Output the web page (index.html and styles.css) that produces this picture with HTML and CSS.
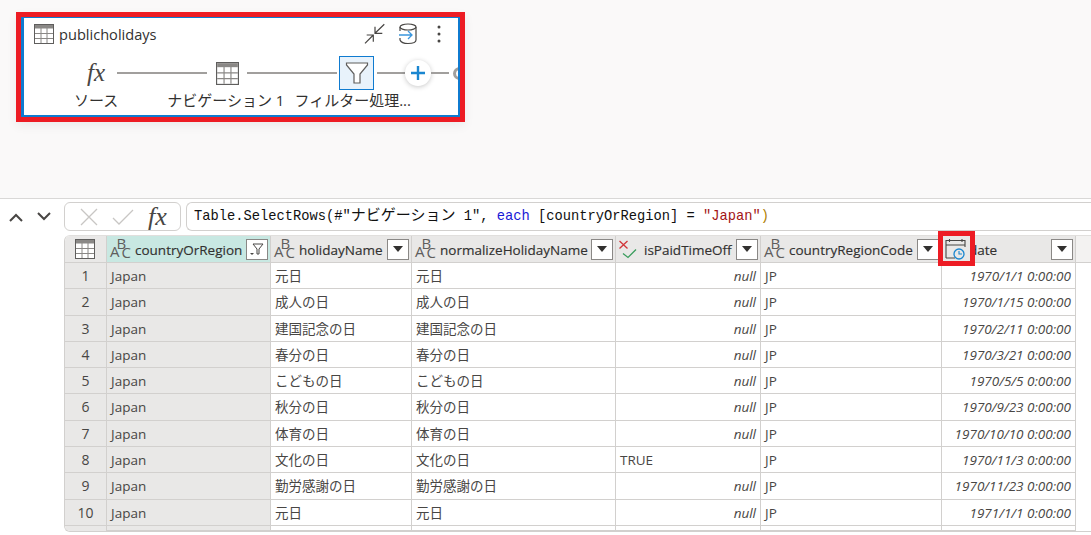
FILE: index.html
```html
<!DOCTYPE html>
<html lang="ja">
<head>
<meta charset="utf-8">
<title>publicholidays</title>
<link rel="stylesheet" href="styles.css">
</head>
<body>
<svg class="defs" width="0" height="0" aria-hidden="true">
  <symbol id="i-table" viewBox="0 0 20 20">
    <rect x=".5" y=".5" width="19" height="19" fill="#fff" stroke="#5f5e5d"/>
    <rect x="1" y="1" width="18" height="3.5" fill="#8a8886"/>
    <path d="M1 9.5h18M1 14.500h18M7 4v15M13 4v15" stroke="#8a8886" fill="none"/>
  </symbol>
</svg>
<section class="top">
  <div class="annot">
    <div class="card">
      <div class="card-head">
        <svg class="ic-table" width="20" height="20"><use href="#i-table"/></svg>
        <span class="card-title">publicholidays</span>
        <span class="card-tools">
          <svg width="22" height="22" viewBox="0 0 22 22" fill="none" stroke="#484644" stroke-width="1.2"><path d="M20.300 1.300L11 10.300M11 3.700v6.600h7.300M1 20.300L9.300 12M2.700 12h6.600v6.700"/></svg>
          <svg class="db" width="20" height="22" viewBox="0 0 20 22" fill="none"><path d="M2 4v4M18 4v13c0 2-3 3.500-8 3.500-4 0-7-1-8-3.500v-2" stroke="#484644" stroke-width="1.2"/><ellipse cx="10" cy="4" rx="8" ry="3" stroke="#484644" stroke-width="1.2"/><path d="M1 12h13M10 8l4 4-4 4" stroke="#3a96dd" stroke-width="1.300"/></svg>
          <svg width="6" height="20" viewBox="0 0 6 20" fill="#484644"><circle cx="3" cy="3" r="1.500"/><circle cx="3" cy="10" r="1.500"/><circle cx="3" cy="17" r="1.500"/></svg>
        </span>
      </div>
      <div class="flow">
        <span class="step"><span class="fx big">fx</span></span>
        <span class="line long first"></span>
        <span class="step"><svg width="23" height="23"><use href="#i-table"/></svg></span>
        <span class="line long"></span>
        <span class="step sel">
          <svg width="24" height="24" viewBox="0 0 24 24" fill="#fff" stroke="#5f5e5d" stroke-width="1.200"><path d="M1.500 2h21v2l-7.500 9v9H9v-9L1.500 4z"/></svg>
        </span>
        <span class="line short"></span>
        <span class="plus">
          <svg width="14" height="14" viewBox="0 0 14 14" stroke="#1a86d0" stroke-width="2.400"><path d="M7 0v14M0 7h14"/></svg>
        </span>
        <span class="line tiny"></span>
        <span class="dot"></span>
      </div>
      <div class="labels">
        <span class="lab lab1">ソース</span>
        <span class="lab lab2">ナビゲーション 1</span>
        <span class="lab lab3">フィルター処理...</span>
      </div>
    </div>
  </div>
</section>
<section class="bottom">
  <div class="formula">
    <span class="nav">
      <svg width="16" height="10" viewBox="0 0 16 10" fill="none" stroke="#484644" stroke-width="2"><path d="M2 9l6-6 6 6"/></svg>
      <svg width="16" height="10" viewBox="0 0 16 10" fill="none" stroke="#484644" stroke-width="2"><path d="M2 1l6 6 6-6"/></svg>
    </span>
    <span class="fx-box">
      <svg width="20" height="20" viewBox="0 0 20 20" stroke="#c8c6c4" stroke-width="1.300" fill="none"><path d="M2 2l16 16M18 2L2 18"/></svg>
      <svg width="24" height="20" viewBox="0 0 24 20" stroke="#c8c6c4" stroke-width="1.300" fill="none"><path d="M2 11l6 6L22 3"/></svg>
      <span class="fx">fx</span>
    </span>
    <div class="input">Table.SelectRows(#"<span class="cjk">ナビゲーション</span> 1", <span class="kw">each</span> [countryOrRegion] = <span class="str">"Japan"</span><span class="par">)</span></div>
  </div>
  <div class="grid-wrap">
    <div class="grid" id="grid">
      <div class="hd corner"><svg width="20" height="20"><use href="#i-table"/></svg></div>
      <div class="hd hl"><svg class="ty" width="24" height="24" viewBox="0 0 24 24"><text x="0" y="19.500" class="abc">A</text><text x="6.500" y="12" class="abc">B</text><text x="11.500" y="20.500" class="abc">C</text></svg><span class="nm">countryOrRegion</span>
        <span class="btn"><svg width="14" height="13" viewBox="0 0 14 13" fill="none" stroke="#484644"><path d="M3 1h10l-4 5v5H7V6z"/><path d="M0 10h4l-2 2z" fill="#484644" stroke="none"/></svg></span></div>
      <div class="hd"><svg class="ty" width="24" height="24" viewBox="0 0 24 24"><text x="0" y="19.500" class="abc">A</text><text x="6.500" y="12" class="abc">B</text><text x="11.500" y="20.500" class="abc">C</text></svg><span class="nm">holidayName</span><span class="btn"><i class="tri"></i></span></div>
      <div class="hd"><svg class="ty" width="24" height="24" viewBox="0 0 24 24"><text x="0" y="19.500" class="abc">A</text><text x="6.500" y="12" class="abc">B</text><text x="11.500" y="20.500" class="abc">C</text></svg><span class="nm">normalizeHolidayName</span><span class="btn"><i class="tri"></i></span></div>
      <div class="hd"><svg class="ty" width="24" height="22" viewBox="0 0 24 22" fill="none" stroke-width="1.300"><path d="M0.500 3l8 7.500M8.500 3l-8 7.500" stroke="#d13438"/><path d="M4 15.500l5 4 8-8" stroke="#3a9d5d"/></svg><span class="nm">isPaidTimeOff</span><span class="btn"><i class="tri"></i></span></div>
      <div class="hd"><svg class="ty" width="24" height="24" viewBox="0 0 24 24"><text x="0" y="19.500" class="abc">A</text><text x="6.500" y="12" class="abc">B</text><text x="11.500" y="20.500" class="abc">C</text></svg><span class="nm">countryRegionCode</span><span class="btn"><i class="tri"></i></span></div>
      <div class="hd hd-date">
        <span class="nm nm-date">date</span><span class="btn"><i class="tri"></i></span>
        <span class="annot-ic"><svg width="27" height="25" viewBox="0 0 27 25" fill="none" stroke="#484644" stroke-width="1.100"><path d="M3 22V4.500h19V11M3 9h19M6.500 3v3M19 3v3M3 22h9"/><circle cx="16" cy="18" r="5" stroke="#1a86d0" stroke-width="1.300"/><path d="M16 15v3h3" stroke="#1a86d0"/></svg></span>
      </div>
      <div class="hd fill"></div>
    </div>
  </div>
</section>
<script src="grid.js"></script>
</body>
</html>
```
FILE: grid.js
```js
var rows = [
  ["元日","1970/1/1 0:00:00"],["成人の日","1970/1/15 0:00:00"],["建国記念の日","1970/2/11 0:00:00"],
  ["春分の日","1970/3/21 0:00:00"],["こどもの日","1970/5/5 0:00:00"],["秋分の日","1970/9/23 0:00:00"],
  ["体育の日","1970/10/10 0:00:00"],["文化の日","1970/11/3 0:00:00"],["勤労感謝の日","1970/11/23 0:00:00"],["元日","1971/1/1 0:00:00"],["",""]
];
var g = document.getElementById("grid");
function cell(cls, txt) {
  var d = document.createElement("div");
  d.className = "c " + cls;
  d.textContent = txt;
  g.appendChild(d);
}
rows.forEach(function (r, i) {
  var blank = r[0] === "";
  cell(blank ? "num last" : "num", blank ? "" : i + 1);
  cell("shade", blank ? "" : "Japan");
  cell("", r[0]);
  cell("", r[0]);
  if (blank) cell("", "");
  else if (i === 7) cell("", "TRUE");
  else cell("right it", "null");
  cell("", blank ? "" : "JP");
  cell("right it", r[1]);
  cell("fill", "");
});
```
FILE: styles.css
```css
* { box-sizing: border-box; }
html, body { margin: 0; height: 100%; overflow: hidden; }
body {
  width: 1091px;
  height: 535px;
  background: #fff;
  color: #323130;
  font-family: "Open Sans", "Noto Sans CJK JP", sans-serif;
  font-size: 13.5px;
}
.defs { position: absolute; }
.abc { font: 15px "Open Sans", sans-serif; fill: #5f5e5d; }

.top {
  height: 199px;
  padding: 12px 0 0 16px;
  background: #faf9f9;
  border-bottom: 1px solid #d9d8d7;
}
.annot {
  width: 449px;
  height: 110px;
  border: 5px solid #ed1c24;
  box-shadow: 0 4px 10px rgba(0,0,0,.06);
}
.card {
  height: 100%;
  background: #fff;
  border: solid #0f7bd0;
  border-width: 1px 2px 2px 3px;
  overflow: hidden;
}
.card-head {
  display: flex;
  align-items: center;
  height: 32px;
  padding-left: 10px;
}
.card-title { margin-left: 5px; font-size: 14.6px; }
.card-tools { margin-left: auto; display: flex; align-items: center; gap: 12px; padding-right: 16px; }
.db { margin-right: 6px; }
.flow {
  display: flex;
  align-items: center;
  height: 34px;
  margin-top: 6px;
  padding-left: 52px;
  white-space: nowrap;
}
.step { width: 40px; height: 34px; display: flex; align-items: center; justify-content: center; flex: none; }
.step.sel { width: 35px; margin-left: 2px; background: #e8f2fb; border: 1px solid #0f7bd0; }
.line { height: 2px; background: #a19f9d; flex: none; }
.line.long { width: 90px; }
.line.first { margin-left: 1px; }
.line.short { width: 28px; margin-left: 3px; }
.line.tiny { width: 18px; }
.plus {
  width: 26px; height: 26px; border-radius: 50%; background: #fff; flex: none;
  display: flex; align-items: center; justify-content: center;
  box-shadow: 0 1px 5px rgba(0,0,0,.22);
}
.dot { width: 13px; height: 13px; border: 3px solid #a19f9d; border-radius: 50%; margin-left: 4px; flex: none; box-shadow: 0 0 0 3px #fff; }
.fx { font: italic 24px "Liberation Serif", serif; color: #484644; }
.fx.big { font-size: 25px; }
.labels { display: flex; font-size: 15px; line-height: 20px; color: #323130; white-space: nowrap; }
.lab1 { margin-left: 50px; }
.lab2 { margin-left: 49px; }
.lab3 { margin-left: 10px; }

.formula { display: flex; align-items: center; height: 29px; margin-top: 3px; }
.nav { width: 64px; display: flex; justify-content: center; gap: 12px; padding-right: 4px; }
.fx-box {
  width: 117px; height: 29px; flex: none;
  display: flex; align-items: center; gap: 12px; padding-left: 14px;
  border: 1px solid #d2d0ce; border-radius: 6px;
}
.fx-box .fx { font-size: 26px; line-height: 1; margin-left: 1px; }
.input {
  flex: 1; height: 29px; margin-left: 5px; padding: 0 0 0 7px;
  border: 1px solid #d2d0ce; border-right: 0; border-radius: 6px 0 0 6px;
  font: 13.75px/27px "Liberation Mono", "Noto Sans CJK JP", monospace;
  color: #111;
  white-space: nowrap;
  overflow: hidden;
}
.cjk { font-size: 15px; }
.kw { color: #1a1ad6; }
.str { color: #a31515; }
.par { color: #b08000; }

.grid-wrap { margin: 4px 0 0 64px; width: 1027px; }
.grid {
  display: grid;
  grid-template-columns: 42px 164px 141px 204px 145px 181px 134px 16px;
  grid-template-rows: 27px repeat(10, 26.3px) 5px;
  border-left: 1px solid #d2d0ce;
  border-top: 1px solid #e1dfdd;
  border-bottom: 1px solid #d2d0ce;
  border-radius: 6px 0 0 6px;
}
.hd {
  display: flex; align-items: center; min-width: 0;
  background: #e9e8e7;
  border-right: 1px solid #d2d0ce;
  border-bottom: 1px solid #d2d0ce;
  padding: 0 2px 0 3px;
  position: relative;
  font-size: 13.5px;
}
.hd.hl { background: #c8e8e2; }
.hd.corner { justify-content: center; padding: 0 2px 0 0; border-top-left-radius: 5px; }
.hd.fill { background: #f3f2f1; border-right: 0; }
.ty { flex: none; margin-right: 1px; overflow: visible; }
.nm { white-space: nowrap; color: #323130; -webkit-text-stroke: .15px #323130; margin-top: 2px; }
.nm-date { margin-left: 24px; }
.btn {
  margin-left: auto; flex: none; width: 22px; height: 21px;
  background: #fff; border: 1px solid #8a8886;
  display: flex; align-items: center; justify-content: center;
}
.tri { width: 0; height: 0; border: 5px solid transparent; border-top: 6px solid #323130; border-bottom: 0; }
.annot-ic {
  position: absolute; left: -4px; top: -5px;
  width: 37px; height: 35px;
  border: 5px solid #ed1c24;
  display: flex; align-items: center; justify-content: center;
  background: #e9e8e7;
  z-index: 2;
}
.c {
  border-right: 1px solid #d2d0ce;
  border-bottom: 1px solid #d2d0ce;
  padding: 0 4px;
  line-height: 26px;
  white-space: nowrap;
  overflow: hidden;
  color: #484644;
}
.c.num { text-align: center; background: #e9e8e7; font-size: 14px; }
.c.last { border-bottom: 0; border-bottom-left-radius: 5px; }
.c.shade { background: #e9e8e7; }
.c.right { text-align: right; }
.c.it { font-style: italic; }
.c.fill { background: #fff; border: 0; }
```
